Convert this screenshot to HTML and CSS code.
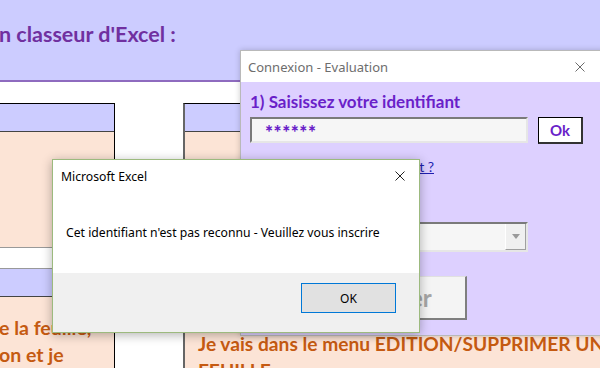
FILE: index.html
```html
<!DOCTYPE html>
<html lang="fr">
<head>
    <meta charset="UTF-8">
    <meta name="viewport" content="width=device-width, initial-scale=1.0">
    <link rel="stylesheet" href="styles.css">
    <title>Connexion - Evaluation</title>
</head>
<body>

    <!-- Feuille Excel en arrière-plan -->
    <div class="sheet">
        <div class="banner">
            <h1>n classeur d'Excel :</h1>
        </div>

        <div class="sheet-grid">
            <div class="col col-left">
                <div class="band"></div>
                <div class="cell cell-peach"></div>
                <div class="cell cell-white"></div>
                <div class="band"></div>
                <div class="cell cell-text">
                    <p>e la feuille,</p>
                    <p>on et je</p>
                </div>
            </div>
            <div class="col-gap"></div>
            <div class="col col-right">
                <div class="band"></div>
                <div class="cell cell-text cell-text-right">
                    <p>Je vais dans le menu EDITION/SUPPRIMER UNE</p>
                    <p>FEUILLE</p>
                </div>
            </div>
        </div>
    </div>

    <!-- Formulaire de connexion -->
    <div class="win win-connexion">
        <div class="titlebar">
            <span>Connexion - Evaluation</span>
            <svg class="close" width="10" height="10" viewBox="0 0 10 10">
                <path d="M0.5 0.5 L9.5 9.5 M9.5 0.5 L0.5 9.5" stroke="#6b6b6b" stroke-width="1" fill="none"/>
            </svg>
        </div>
        <div class="form">
            <h2>1) Saisissez votre identifiant</h2>
            <div class="form-row">
                <div class="field">******</div>
                <button class="btn-ok">Ok</button>
            </div>
            <div class="link-row">
                <a class="link" href="#">Pas encore inscrit ?</a>
            </div>
            <h2 class="label-test">2) Évaluation</h2>
            <div class="combo">
                <span class="combo-arrow">
                    <svg width="8" height="5" viewBox="0 0 8 5"><path d="M0 0 L8 0 L4 5 Z" fill="#9a9a9a"/></svg>
                </span>
            </div>
            <div class="form-row form-row-end">
                <button class="btn-valider">Valider</button>
            </div>
        </div>
    </div>

    <!-- Message d'erreur -->
    <div class="win msgbox">
        <div class="msg-title">
            <span>Microsoft Excel</span>
            <svg class="close" width="10" height="10" viewBox="0 0 10 10">
                <path d="M0.5 0.5 L9.5 9.5 M9.5 0.5 L0.5 9.5" stroke="#222" stroke-width="1" fill="none"/>
            </svg>
        </div>
        <div class="msg-body">Cet identifiant n'est pas reconnu - Veuillez vous inscrire</div>
        <div class="msg-footer">
            <button class="btn-msg">OK</button>
        </div>
    </div>

</body>
</html>
```

FILE: styles.css
```css
body {
    margin: 0;
    width: 600px;
    height: 368px;
    overflow: hidden;
    position: relative;
    background-color: #fff;
    font-family: Lato, 'Liberation Sans', sans-serif;
}

/* Feuille */

.banner {
    height: 80px;
    background-color: #ccccff;
    border-bottom: 2px solid #8e6bbf;
}

.banner h1 {
    margin: 0 0 0 -1px;
    padding-top: 22px;
    font-size: 21.5px;
    line-height: 24px;
    font-weight: bold;
    color: #7030a0;
    white-space: nowrap;
}

.sheet-grid {
    display: flex;
    margin-top: 21px;
    height: 265px;
}

.col {
    display: flex;
    flex-direction: column;
    border-top: 1px solid #000;
}

.col-left {
    flex: 0 0 114px;
    border-right: 1px solid #000;
}

.col-gap {
    flex: 0 0 68px;
}

.col-right {
    flex: 1;
    min-width: 0;
    border-left: 2px solid #666;
}

.band {
    height: 27px;
    background-color: #ccccff;
    border-bottom: 1px solid #444;
}

.cell-peach {
    height: 115px;
    background-color: #fce4d6;
    border-bottom: 1px solid #999;
}

.cell-white {
    height: 20px;
    background-color: #fff;
    border-bottom: 1px solid #999;
}

.cell-text {
    flex: 1;
    background-color: #fce4d6;
    padding-top: 17px;
    overflow: hidden;
}

.cell-text-right {
    padding-top: 198px;
    padding-left: 13px;
}

.cell-text p {
    margin: 0 0 0 -1px;
    font-size: 19.5px;
    line-height: 27px;
    font-weight: bold;
    color: #c55a11;
    white-space: nowrap;
}

.cell-text-right p {
    margin-left: 0;
    font-size: 19.2px;
}

/* Fenetres */

.win {
    position: absolute;
    box-sizing: border-box;
}

.win-connexion {
    left: 240px;
    top: 50px;
    width: 372px;
    height: 286px;
    background-color: #ddd0ff;
    border: 1px solid #b9b9b9;
    box-shadow: 0 0 6px rgba(0, 0, 0, 0.2);
}

.titlebar {
    height: 31px;
    background-color: #fff;
    display: flex;
    align-items: center;
    justify-content: space-between;
    padding: 0 26px 0 7px;
    font-family: 'Noto Sans', sans-serif;
    font-size: 13px;
    color: #6d6d6d;
}

.form {
    display: flex;
    flex-direction: column;
    align-items: flex-start;
    padding-left: 9px;
}

.form h2 {
    margin: 9px 0 0 0;
    font-size: 17px;
    line-height: 21px;
    font-weight: bold;
    color: #6a1fc9;
}

.form-row {
    display: flex;
    margin-top: 5px;
}

.field {
    box-sizing: border-box;
    width: 278px;
    height: 26px;
    padding-left: 13px;
    background-color: #f6f6f6;
    border: 2px solid #e6e6e6;
    border-top-color: #7a7a7a;
    border-left-color: #7a7a7a;
    font-size: 19px;
    font-weight: 900;
    line-height: 26px;
    color: #6a1fc9;
    letter-spacing: 0.5px;
}

.btn-ok {
    box-sizing: border-box;
    width: 45px;
    height: 27px;
    margin-left: 10px;
    background-color: #fff;
    border: 1px solid #000;
    border-right: 2px solid #333;
    border-bottom: 2px solid #333;
    font-family: Lato, sans-serif;
    font-size: 15px;
    font-weight: bold;
    color: #6a1fc9;
    padding: 0;
}

.link-row {
    width: 184px;
    margin-top: 12px;
    text-align: right;
}

.link {
    font-size: 14px;
    line-height: 18px;
    color: #1f1fb0;
}

.form h2.label-test {
    margin-top: 17px;
}

.combo {
    box-sizing: border-box;
    width: 278px;
    height: 30px;
    margin-top: 8px;
    background-color: #f6f6f6;
    border: 2px solid #e6e6e6;
    border-top-color: #7a7a7a;
    border-left-color: #7a7a7a;
    display: flex;
    justify-content: flex-end;
}

.combo-arrow {
    width: 19px;
    background-color: #f0f0f0;
    border-left: 1px solid #fff;
    border-bottom: 1px solid #a0a0a0;
    border-right: 1px solid #a0a0a0;
    display: flex;
    align-items: center;
    justify-content: center;
}

.form-row-end {
    width: 217px;
    justify-content: flex-end;
    margin-top: 24px;
}

.btn-valider {
    box-sizing: border-box;
    width: 130px;
    height: 44px;
    padding: 0 14px 0 0;
    background-color: #f4f4f4;
    border: 1px solid #e0e0e0;
    border-right: 2px solid #7f7f7f;
    border-bottom: 2px solid #7f7f7f;
    font-family: Lato, sans-serif;
    font-size: 24px;
    font-weight: bold;
    color: #a6a6a6;
}

.msgbox {
    left: 52px;
    top: 159px;
    width: 368px;
    height: 174px;
    background-color: #fff;
    border: 1px solid #9cba7e;
    box-shadow: 0 2px 10px rgba(0, 0, 0, 0.3);
    display: flex;
    flex-direction: column;
    font-family: 'Noto Sans', sans-serif;
    font-size: 12.2px;
    color: #000;
}

.msg-title {
    height: 32px;
    display: flex;
    align-items: center;
    justify-content: space-between;
    padding: 0 14px 0 8px;
}

.msg-body {
    height: 81px;
    display: flex;
    align-items: center;
    padding-left: 13px;
}

.msg-footer {
    flex: 1;
    background-color: #f0f0f0;
    display: flex;
    justify-content: flex-end;
    align-items: flex-start;
    padding: 10px 23px 0 0;
}

.btn-msg {
    box-sizing: border-box;
    width: 95px;
    height: 30px;
    background-color: #e1e1e1;
    border: 1px solid #0078d7;
    font-family: 'Noto Sans', sans-serif;
    font-size: 12px;
    color: #000;
    padding: 0;
}
```
